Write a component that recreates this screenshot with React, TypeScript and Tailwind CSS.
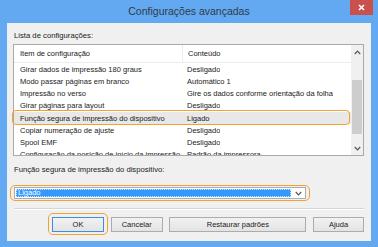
const rows = [
  ["Girar dados de impressão 180 graus", "Desligado"],
  ["Modo passar páginas em branco", "Automático 1"],
  ["Impressão no verso", "Gire os dados conforme orientação da folha"],
  ["Girar páginas para layout", "Desligado"],
  ["Função segura de impressão do dispositivo", "Ligado"],
  ["Copiar numeração de ajuste", "Desligado"],
  ["Spool EMF", "Desligado"],
  ["Configuração da posição de início da impressão", "Padrão da impressora"],
];

const font = "font-['Liberation_Sans',Arial,sans-serif]";

function Chevron({ up }: { up?: boolean }) {
  return (
    <svg width="7" height="5" viewBox="0 0 7 5">
      <polyline
        points={up ? "0.8,4 3.5,1.2 6.2,4" : "0.8,1 3.5,3.8 6.2,1"}
        fill="none"
        stroke="#555"
        strokeWidth="1.2"
      />
    </svg>
  );
}

function Button({ label, w, primary }: { label: string; w: string; primary?: boolean }) {
  return (
    <div
      className={`${w} h-[15px] flex items-center justify-center text-[7.5px] text-[#1a1a1a] bg-gradient-to-b from-[#f2f2f2] to-[#e3e3e3] border ${
        primary ? "border-[#3c8fd9]" : "border-[#acacac]"
      }`}
    >
      {label}
    </div>
  );
}

export default function App() {
  return (
    <div className={`w-[378px] h-[247px] bg-[#63a9f1] flex flex-col ${font}`}>
      {/* title bar */}
      <div className="h-[23px] grid grid-cols-[1fr_auto_1fr]">
        <div />
        <div className="flex items-center text-[10.5px] text-[#2e3b48] pt-[1px]">Configurações avançadas</div>
        <div className="flex justify-end pr-[5px]">
          <div className="w-[23px] h-[15px] bg-[#c9504c] flex items-center justify-center">
            <svg width="7" height="7" viewBox="0 0 7 7">
              <path d="M1 1L6 6M6 1L1 6" stroke="#fff" strokeWidth="1.6" />
            </svg>
          </div>
        </div>
      </div>

      {/* client area */}
      <div className="mx-[7px] h-[218px] bg-[#f0f0f0] pl-[6px] pr-[7px] flex flex-col text-[#1a1a1a]">
        <div className="mt-[8px] h-[10px] leading-[10px] text-[7.7px] pl-[1px]">Lista de configurações:</div>

        <div className="relative mt-[3px]">
          <div className="h-[112px] border border-[#a9a9a9] bg-white flex overflow-hidden">
            <div className="flex-1 flex flex-col overflow-hidden text-[7.5px]">
              <div className="h-[18px] shrink-0 flex items-center border-b border-[#ececec]">
                <div className="w-[169px] pl-[6px] h-full flex items-center border-r border-[#ececec]">Item de configuração</div>
                <div className="pl-[5px]">Conteúdo</div>
              </div>
              {rows.map(([item, value], i) => (
                <div
                  key={item}
                  className={`h-[12.25px] shrink-0 flex items-center whitespace-nowrap ${i === 4 ? "bg-[#e8e8e8]" : ""}`}
                >
                  <div className="w-[169px] pl-[6px] overflow-hidden">{item}</div>
                  <div className="pl-[4px] overflow-hidden">{value}</div>
                </div>
              ))}
            </div>
            {/* scrollbar */}
            <div className="w-[12px] bg-[#f0f0f0] flex flex-col">
              <div className="h-[14px] flex items-center justify-center">
                <Chevron up />
              </div>
              <div className="flex-1 px-[1px]">
                <div className="mt-[21px] h-[54px] bg-[#cdcdcd]" />
              </div>
              <div className="h-[14px] flex items-center justify-center">
                <Chevron />
              </div>
            </div>
          </div>
          {/* highlight outline */}
          <div className="absolute left-[-1px] top-[66px] w-[338px] h-[14.5px] border-[1.5px] border-[#f5a132] rounded-[4px]" />
        </div>

        <div className="mt-[9px] h-[10px] leading-[10px] text-[7.7px] pl-[1px]">
          Função segura de impressão do dispositivo:
        </div>

        <div className="relative mt-[12px] ml-[1px] w-[292px]">
          <div className="h-[12px] border border-[#acacac] bg-white flex">
            <div className="flex-1 m-[1px] bg-[#3399ff] text-white text-[7.5px] flex items-center pl-[2px] outline-1 outline-dotted outline-[#cfe6ff] -outline-offset-1">
              Ligado
            </div>
            <div className="w-[13px] flex items-center justify-center">
              <Chevron />
            </div>
          </div>
          <div className="absolute -left-[4px] -top-[2px] -right-[4px] -bottom-[2px] border-[1.5px] border-[#f5a132] rounded-[5px]" />
        </div>

        <div className="mt-[9px] ml-[1px] h-[2px] border-t border-[#d5d5d5] border-b border-b-white" />

        <div className="mt-[7px] flex justify-end gap-[6.67px]">
          <div className="relative">
            <Button label="OK" w="w-[52px]" primary />
            <div className="absolute -left-[4px] -top-[4px] -right-[4px] -bottom-[3px] border-[1.5px] border-[#f5a132] rounded-[5px]" />
          </div>
          <Button label="Cancelar" w="w-[52px]" />
          <Button label="Restaurar padrões" w="w-[137px]" />
          <Button label="Ajuda" w="w-[51px]" />
        </div>
      </div>
    </div>
  );
}
